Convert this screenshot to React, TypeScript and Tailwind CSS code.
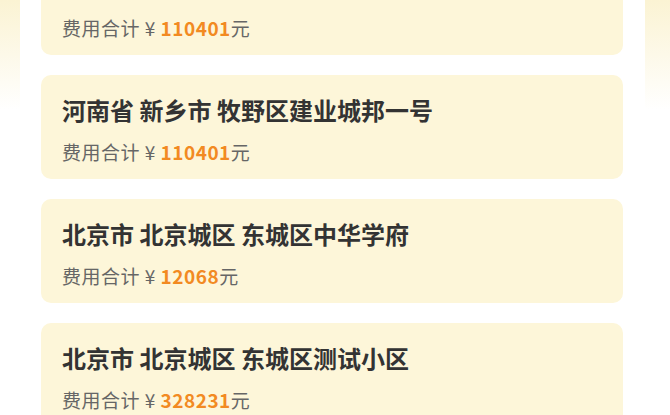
const orders = [
  { address: "河南省 新乡市 牧野区建业城邦一号", total: "110401" },
  { address: "河南省 新乡市 牧野区建业城邦一号", total: "110401" },
  { address: "北京市 北京城区 东城区中华学府", total: "12068" },
  { address: "北京市 北京城区 东城区测试小区", total: "328231" },
]

export default function App() {
  return (
    <div
      className="h-[415px] overflow-hidden bg-[linear-gradient(to_bottom,#fbf3d3,#ffffff_110px)] pl-[20px] pr-[25px]"
      style={{ fontFamily: '"Noto Sans CJK SC", "Noto Sans", sans-serif' }}
    >
      <div className="h-full bg-white pl-[21px] pr-[22px]">
        <div className="-mt-[49px] flex flex-col gap-[20px]">
          {orders.map((o, i) => (
            <div key={i} className="rounded-[10px] bg-[#fdf6d9] px-[21px] pt-[20px] pb-[14px]">
              <h2 className="text-[24px] leading-[30px] font-bold text-[#333333]">
                {o.address}
              </h2>
              <p className="mt-[14px] text-[19px] leading-[26px] tracking-[0.5px] text-[#666666]">
                费用合计 ¥ <span className="font-bold text-[#f28a22]">{o.total}</span>元
              </p>
            </div>
          ))}
        </div>
      </div>
    </div>
  )
}
